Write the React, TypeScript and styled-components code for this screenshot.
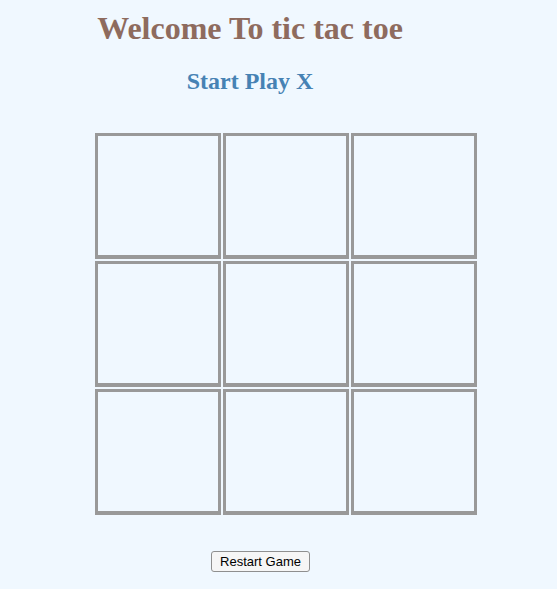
import React, { useState } from "react";
import styled, { createGlobalStyle } from "styled-components";

const GlobalStyle = createGlobalStyle`
  html, body {
    margin: 0;
    padding: 0;
    background: #f0f8ff;
  }
  body {
    font-family: "Liberation Serif", "Times New Roman", serif;
  }
`;

export default function App() {
  const [cells, setCells] = useState<string[]>(Array(9).fill(""));
  const [turn, setTurn] = useState("X");

  const play = (i: number) => {
    if (cells[i]) return;
    const next = [...cells];
    next[i] = turn;
    setCells(next);
    setTurn(turn === "X" ? "O" : "X");
  };

  const restart = () => {
    setCells(Array(9).fill(""));
    setTurn("X");
  };

  return (
    <Page>
      <GlobalStyle />
      <Header>
        <Title>Welcome To tic tac toe</Title>
        <Status>Start Play {turn}</Status>
      </Header>
      <Board>
        {cells.map((c, i) => (
          <Cell key={i} onClick={() => play(i)}>
            {c}
          </Cell>
        ))}
      </Board>
      <Footer>
        <Button onClick={restart}>Restart Game</Button>
      </Footer>
    </Page>
  );
}

const Page = styled.div`
  min-height: 589px;
  background: #f0f8ff;
  padding-top: 10px;
  box-sizing: border-box;
`;

const Header = styled.div`
  width: 500px;
  text-align: center;
`;

const Title = styled.h1`
  margin: 0;
  font-size: 32px;
  font-weight: bold;
  line-height: 37px;
  color: #8e6b5e;
`;

const Status = styled.h2`
  margin: 20px 0 0 0;
  font-size: 24px;
  font-weight: bold;
  line-height: 28px;
  color: #4682b4;
`;

const Board = styled.div`
  margin: 38px 0 0 95px;
  display: grid;
  grid-template-columns: repeat(3, 126px);
  grid-auto-rows: 126px;
  gap: 2px;
`;

const Cell = styled.div`
  box-sizing: border-box;
  border: 3px solid #999999;
  border-bottom-width: 4px;
  display: flex;
  align-items: center;
  justify-content: center;
  font-size: 60px;
  font-weight: bold;
  color: #4682b4;
  cursor: pointer;
`;

const Footer = styled.div`
  margin: 36px 0 0 211px;
`;

const Button = styled.button`
  font-family: "Liberation Sans", Arial, sans-serif;
  font-size: 13px;
  width: 99px;
  height: 21px;
  padding: 0;
  background: #f6f6f6;
  border: 1px solid #8f8f8f;
  border-radius: 3px;
  color: #000;
  cursor: pointer;
`;
